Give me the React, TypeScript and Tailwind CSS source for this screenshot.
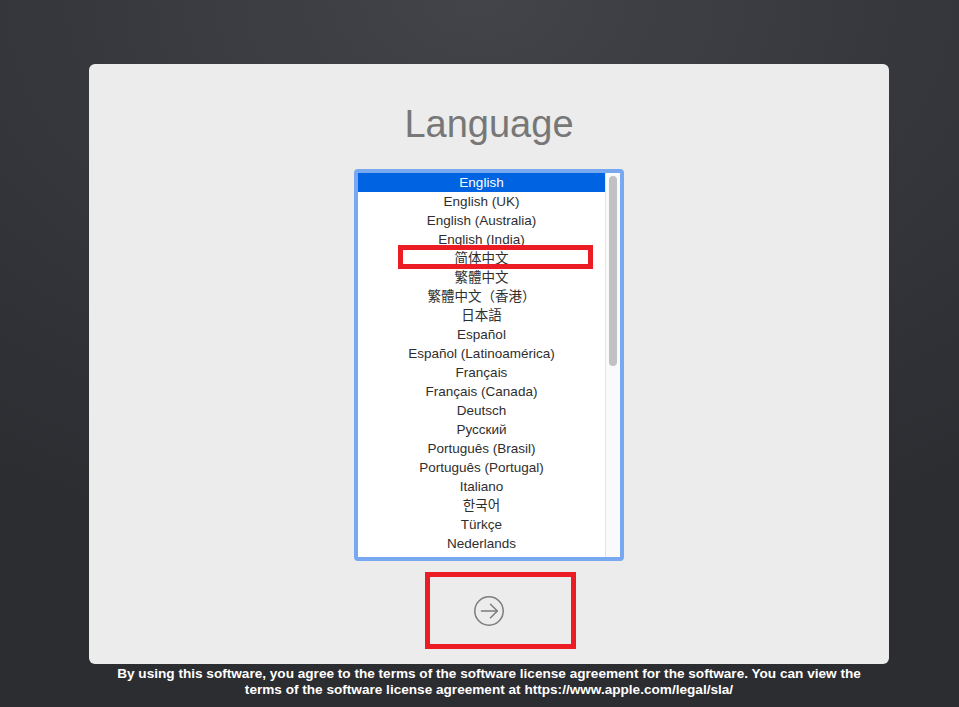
import React from "react";

const LANGS = [
  "English",
  "English (UK)",
  "English (Australia)",
  "English (India)",
  "简体中文",
  "繁體中文",
  "繁體中文（香港）",
  "日本語",
  "Español",
  "Español (Latinoamérica)",
  "Français",
  "Français (Canada)",
  "Deutsch",
  "Русский",
  "Português (Brasil)",
  "Português (Portugal)",
  "Italiano",
  "한국어",
  "Türkçe",
  "Nederlands",
];

function ArrowCircle() {
  return (
    <svg width="30" height="30" viewBox="0 0 30 30" fill="none">
      <circle cx="15" cy="15" r="14.2" stroke="#7c7c7c" strokeWidth="1.5" />
      <path d="M7.5 15H23.2" stroke="#7c7c7c" strokeWidth="1.5" strokeLinecap="round" />
      <path d="M16.5 8.2L23.3 15L16.5 21.8" stroke="#7c7c7c" strokeWidth="1.5" strokeLinecap="round" strokeLinejoin="round" />
    </svg>
  );
}

export default function App() {
  return (
    <div
      className="relative h-[707px] w-full overflow-hidden bg-[radial-gradient(ellipse_90%_80%_at_50%_0%,#434449_0%,#35363b_55%,#2c2d31_100%)]"
      style={{ fontFamily: '"Liberation Sans", "Noto Sans CJK SC", "Noto Sans CJK KR", sans-serif' }}
    >
      <div className="ml-[89px] w-[800px] pt-[64px]">
        <div className="flex h-[600px] flex-col items-center rounded-[6px] bg-[#ececec] pt-[41px]">
          <h1 className="text-[38px] leading-[38px] text-[#777777]">Language</h1>

          <div className="mt-[26px] flex h-[392px] w-[270px] overflow-hidden rounded-[4px] border-[4px] border-[#78a8f0] bg-white">
            <ul className="flex-1">
              {LANGS.map((l, i) => (
                <li
                  key={l}
                  className={
                    i === 0
                      ? "h-[19px] bg-[#0063e1] text-center text-[13.5px] leading-[19px] text-white"
                      : "h-[19px] text-center text-[13.5px] leading-[19px] text-[#2e2e2e]"
                  }
                >
                  {l}
                </li>
              ))}
            </ul>
            <div className="w-[15px] border-l border-[#e4e4e4] bg-[#fafafa] pl-[3px] pt-[3px]">
              <div className="h-[190px] w-[8px] rounded-full bg-[#c2c2c2]" />
            </div>
          </div>

          <button className="mt-[35px] flex h-[30px] w-[30px] items-center justify-center">
            <ArrowCircle />
          </button>
        </div>

        <p className="pt-[2px] text-center text-[13.6px] font-bold leading-[16px] text-white">
          By using this software, you agree to the terms of the software license agreement for the software. You can view the
          <br />
          terms of the software license agreement at https://www.apple.com/legal/sla/
        </p>
      </div>

      {/* red annotation boxes */}
      <div className="absolute left-[398px] top-[245px] h-[24px] w-[195px] border-[5px] border-[#eb1c24]" />
      <div className="absolute left-[425px] top-[572px] h-[77px] w-[151px] border-[5px] border-[#eb1c24]" />
    </div>
  );
}
